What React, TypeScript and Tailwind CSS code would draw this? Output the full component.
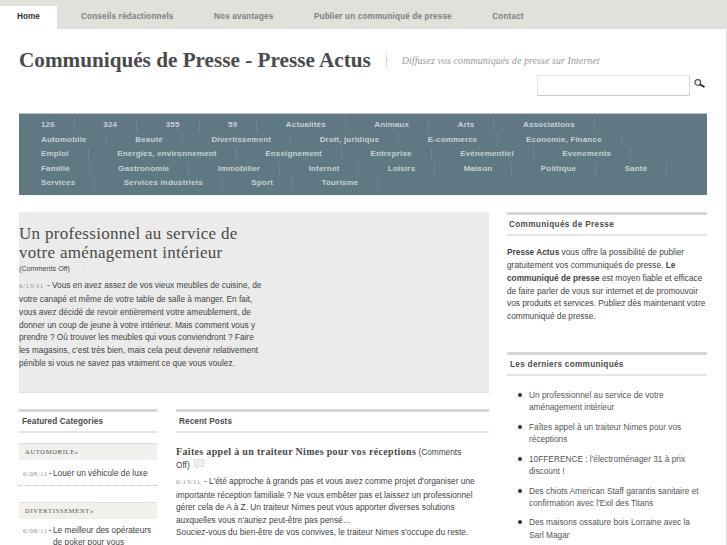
const sans = "font-['Liberation_Sans',Arial,sans-serif]";

const rows: string[][] = [
  ["126", "324", "355", "59", "Actualités", "Animaux", "Arts", "Associations"],
  ["Automobile", "Beauté", "Divertissement", "Droit, juridique", "E-commerce", "Economie, Finance"],
  ["Emploi", "Energies, environnement", "Enseignement", "Entreprise", "Evènementiel", "Evenements"],
  ["Famille", "Gastronomie", "Immobilier", "Internet", "Loisirs", "Maison", "Politique", "Santé"],
  ["Services", "Services industriels", "Sport", "Tourisme"],
];

const latest = [
  "Un professionnel au service de votre aménagement intérieur",
  "Faîtes appel à un traiteur Nimes pour vos réceptions",
  "10FFERENCE : l'électroménager 31 à prix discount !",
  "Des chiots American Staff garantis sanitaire et confirmation avec l'Exil des Titans",
  "Des maisons ossature bois Lorraine avec la Sarl Magar",
];

function Comment() {
  return (
    <svg width="10" height="10" viewBox="0 0 10 10" className="inline-block ml-1 align-[-1px]">
      <path d="M0.5 0.5H9.5V7.5H5.5L3.5 9.5V7.5H0.5Z" fill="#f4f4f4" stroke="#dcdcdc" />
      <path d="M2 3H8M2 5H8" stroke="#e2e2e2" />
    </svg>
  );
}

function Head({ children }: { children: React.ReactNode }) {
  return (
    <div className="border-t-[3px] border-b-2 border-t-[#d6d6d6] border-b-[#e6e6e6] h-[24px] flex items-center pt-px pl-[3px] text-[8.2px] font-bold text-[#4a4a4a] tracking-[0.1px]">
      {children}
    </div>
  );
}

function Date({ children }: { children: React.ReactNode }) {
  return <span className="font-['Liberation_Serif',serif] text-[7px] text-[#8f8f8f] tracking-[0.5px] mr-px">{children}</span>;
}

export default function App() {
  return (
    <div className={`w-[727px] h-[545px] overflow-hidden bg-white ${sans}`}>
      <nav className="h-[29px] bg-[#e2e0da] flex items-end">
        <div className="h-[23px] w-[57px] bg-white flex items-center pl-[17px] text-[8.2px] font-bold text-[#333333]">Home</div>
        <div className="h-[23px] flex items-center text-[8.2px] font-bold text-[#7f7f7f] tracking-[0.13px]">
          <span className="ml-[24px]">Conseils rédactionnels</span>
          <span className="ml-[40.5px]">Nos avantages</span>
          <span className="ml-[40.5px]">Publier un communiqué de presse</span>
          <span className="ml-[40.5px]">Contact</span>
        </div>
      </nav>

      <div className="h-[516px] pl-[19px] pr-[19px] border-r border-[#dddddd]">
        <header className="h-[84px] relative">
          <div className="flex items-center pt-[19px]">
            <h1 className="font-['Liberation_Serif',serif] text-[21.2px] font-bold text-[#4a4a4a] leading-[24px]">Communiqués de Presse - Presse Actus</h1>
            <div className="ml-[15px] h-[13px] border-l border-dotted border-[#bbbbbb]" />
            <div className="ml-[15px] font-['Liberation_Serif',serif] italic text-[10px] text-[#999999] tracking-[0.06px]">Diffusez vos communiqués de presse sur Internet</div>
          </div>
          <div className="absolute top-[46px] left-[518px] flex items-center">
            <div className="w-[153px] h-[21px] bg-white border border-[#e4e4e4] border-b-[#cccccc] border-r-[#d8d8d8]" />
            <svg width="11" height="9" viewBox="0 0 11 9" className="ml-[4px] -mt-[4px]">
              <circle cx="3.7" cy="3.4" r="2.8" fill="none" stroke="#444" strokeWidth="1.1" />
              <path d="M6 5.5L10.5 8" stroke="#222" strokeWidth="1.7" />
            </svg>
          </div>
        </header>

        <div className="h-[82px] bg-[#5f7884] border-t border-t-[#b9c5ca] pt-[4px] pl-[22px] text-[8px] font-bold text-[#c6d1d6] tracking-[0.17px] leading-[14.5px]">
          {rows.map((row, i) => (
            <div key={i} className="flex h-[14.5px]">
              {row.map((c, j) => (
                <div key={c} className="flex items-center">
                  <span className={j === 0 ? "" : "ml-[28.5px]"}>{c}</span>
                  <span className="ml-[19px] h-[12px] border-r border-dotted border-[#7d929c]" />
                </div>
              ))}
            </div>
          ))}
        </div>

        <div className="mt-[17px] flex gap-[18px]">
          <main className="w-[470px]">
            <section className="h-[181px] bg-[#ebebeb] border-b border-[#e0e0e0] pt-[12px]">
              <h2 className="w-[240px] font-['Liberation_Serif',serif] text-[17px] leading-[19px] text-[#4a4a4a] tracking-[0.3px]">Un professionnel au service de votre aménagement intérieur</h2>
              <div className="text-[7.2px] leading-[10px] text-[#444444]">(Comments Off)<Comment /></div>
              <p className="mt-[5px] w-[245px] text-[8.3px] leading-[12.85px] text-[#444444]">
                <Date>6/13/11</Date> - Vous en avez assez de vos vieux meubles de cuisine, de votre canapé et même de votre table de salle à manger. En fait, vous avez décidé de revoir entièrement votre ameublement, de donner un coup de jeune à votre intérieur. Mais comment vous y prendre ? Où trouver les meubles qui vous conviendront ? Faire les magasins, c'est très bien, mais cela peut devenir relativement pénible si vous ne savez pas vraiment ce que vous voulez.
              </p>
            </section>

            <div className="mt-[16px] flex gap-[19px]">
              <aside className="w-[138px]">
                <Head>Featured Categories</Head>
                <div className="mt-[10px] h-[17px] bg-[#f1f0ec] border-t border-[#dddddd] flex items-center pl-[6px] font-['Liberation_Serif',serif] text-[6.5px] tracking-[0.7px] text-[#555555]">AUTOMOBILE»</div>
                <div className="mt-[7px] pl-[4px] pb-[4px] border-b border-dotted border-[#bbbbbb] text-[8.3px] leading-[12.85px] text-[#444444] flex">
                  <span className="w-[30px] shrink-0 whitespace-nowrap"><Date>6/08/11</Date>-</span>
                  <span>Louer un véhicule de luxe</span>
                </div>
                <div className="mt-[16px] h-[17px] bg-[#f1f0ec] border-t border-[#dddddd] flex items-center pl-[6px] font-['Liberation_Serif',serif] text-[6.5px] tracking-[0.7px] text-[#555555]">DIVERTISSEMENT»</div>
                <div className="mt-[5px] pl-[4px] text-[8.3px] leading-[12px] text-[#444444] flex">
                  <span className="w-[30px] shrink-0 whitespace-nowrap"><Date>6/08/11</Date>-</span>
                  <span>Le meilleur des opérateurs de poker pour vous</span>
                </div>
              </aside>
              <section className="w-[313px]">
                <Head>Recent Posts</Head>
                <div className="mt-[12px] text-[8.3px] leading-[13px] text-[#444444]">
                  <span className="font-['Liberation_Serif',serif] font-bold text-[10px] tracking-[0.33px] text-[#4a4a4a]">Faîtes appel à un traiteur Nimes pour vos réceptions</span> (Comments <span className="whitespace-nowrap">Off)<Comment /></span>
                </div>
                <p className="mt-[3px] text-[8.3px] leading-[12.5px] text-[#444444]">
                  <Date>6/13/11</Date> - L'été approche à grands pas et vous avez comme projet d'organiser une importante réception familiale ? Ne vous embêter pas et laissez un professionnel gérer cela de A à Z. Un traiteur Nimes peut vous apporter diverses solutions auxquelles vous n'auriez peut-être pas pensé…<br />Souciez-vous du bien-être de vos convives, le traiteur Nimes s'occupe du reste.
                </p>
              </section>
            </div>
          </main>

          <aside className="w-[200px]">
            <Head><span className="-ml-px tracking-[0.35px]">Communiqués de Presse</span></Head>
            <p className="mt-[10px] text-[8.3px] leading-[12.85px] text-[#444444]">
              <b>Presse Actus</b> vous offre la possibilité de publier gratuitement vos communiqués de presse. <b>Le communiqué de presse</b> est moyen fiable et efficace de faire parler de vous sur internet et de promouvoir vos produits et services. Publiez dès maintenant votre communiqué de presse.
            </p>
            <div className="mt-[29px]">
              <Head><span className="tracking-[0.3px]">Les derniers communiqués</span></Head>
            </div>
            <ul className="mt-[13px] pl-[11px] pr-[4px] text-[8.3px] leading-[12.4px] text-[#555555]">
              {latest.map((t) => (
                <li key={t} className="flex mb-[7px]">
                  <span className="shrink-0 w-[4px] h-[4px] mt-[4px] mr-[7px] rounded-full bg-[#333333]" />
                  <span>{t}</span>
                </li>
              ))}
            </ul>
          </aside>
        </div>
      </div>
    </div>
  );
}
